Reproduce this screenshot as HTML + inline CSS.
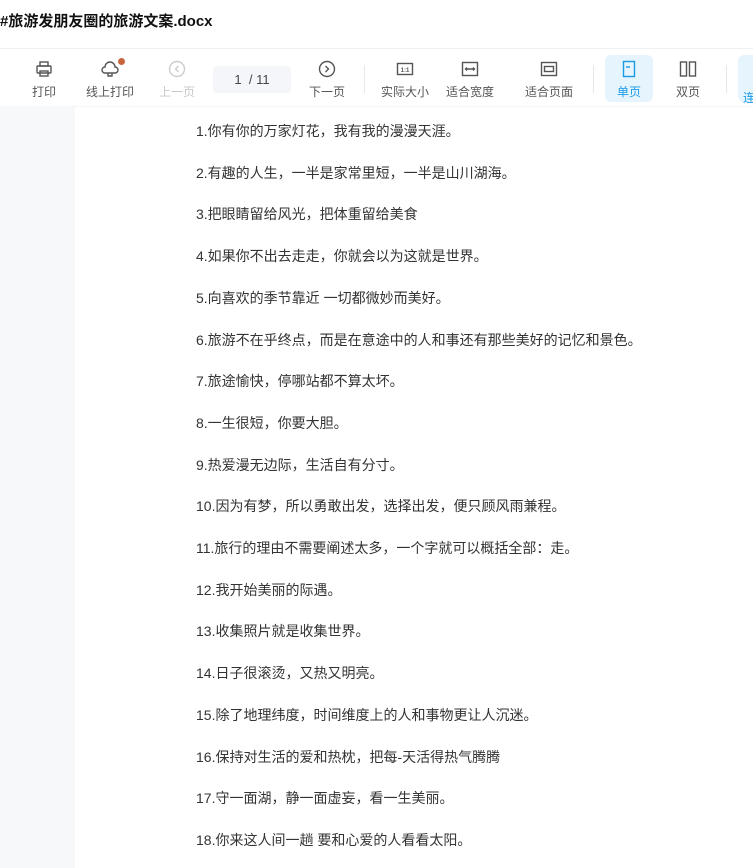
<!DOCTYPE html>
<html><head><meta charset="utf-8"><style>
*{margin:0;padding:0;box-sizing:border-box}
body{width:753px;height:868px;overflow:hidden;background:#fff;font-family:"Liberation Sans","Noto Sans CJK SC",sans-serif;position:relative}
.title{position:absolute;left:0;top:10px;font-size:15px;font-weight:bold;color:#111}
.tb{position:absolute;left:0;top:48px;width:753px;height:59px;border-top:1px solid #eef0f4;border-bottom:1px dotted #eceef2}
.it{position:absolute;top:0;width:64px;margin-left:-32px;text-align:center;font-size:12px;color:#555}
.it svg{position:absolute;left:23px;top:11px}
.it span{position:absolute;left:0;right:0;top:34px}
.sep{position:absolute;top:16px;width:1px;height:28px;background:#e6e8ec}
.left{position:absolute;left:0;top:107px;width:75px;height:761px;background:#f7f8fa}
.doc{position:absolute;left:196px;top:111px;font-size:14px;color:#333;line-height:41.7px}
</style></head><body>
<div class="title">#旅游发朋友圈的旅游文案.docx</div>
<div class="tb">
<div class="it" style="left:44px"><svg width="18" height="18" viewBox="0 0 18 18" fill="none" stroke="#555" stroke-width="1.4"><rect x="5" y="2" width="8" height="4"/><rect x="2" y="6" width="14" height="7" rx="1"/><rect x="5" y="11" width="8" height="5"/></svg><span>打印</span></div>
<div class="it" style="left:110px"><svg width="18" height="18" viewBox="0 0 18 18" fill="none" stroke="#555" stroke-width="1.4"><path d="M4 13a3 3 0 0 1 0-6a5 5 0 0 1 10 0a3 3 0 0 1 0 6z"/><path d="M7 13v3h4v-3"/></svg><span>线上打印</span><div style="position:absolute;left:40px;top:9px;width:7px;height:7px;border-radius:50%;background:#c8653e"></div></div>
<div class="it" style="left:177px;color:#c8c8c8"><svg width="18" height="18" viewBox="0 0 18 18" fill="none" stroke="#ccc" stroke-width="1.4"><circle cx="9" cy="9" r="7.5"/><path d="M10.5 6l-3 3l3 3"/></svg><span>上一页</span></div>
<div style="position:absolute;left:213px;top:17px;width:78px;height:27px;background:#f5f6fa;border-radius:4px;font-size:13px;color:#444;text-align:center;line-height:27px">1 &nbsp;/ 11</div>
<div class="it" style="left:327px"><svg width="18" height="18" viewBox="0 0 18 18" fill="none" stroke="#555" stroke-width="1.4"><circle cx="9" cy="9" r="7.5"/><path d="M7.5 6l3 3l-3 3"/></svg><span>下一页</span></div>
<div class="sep" style="left:364px"></div>
<div class="it" style="left:405px"><svg width="18" height="18" viewBox="0 0 18 18" fill="none" stroke="#555" stroke-width="1.4"><rect x="1.5" y="3.5" width="15" height="11"/><text x="9" y="12" font-size="6" text-anchor="middle" fill="#555" stroke="none" font-weight="bold">1:1</text></svg><span>实际大小</span></div>
<div class="it" style="left:470px"><svg width="18" height="18" viewBox="0 0 18 18" fill="none" stroke="#555" stroke-width="1.4"><rect x="1.5" y="2.5" width="15" height="13"/><path d="M5 9h8M6 7.5L4.5 9L6 10.5M12 7.5l1.5 1.5l-1.5 1.5"/></svg><span>适合宽度</span></div>
<div class="it" style="left:549px"><svg width="18" height="18" viewBox="0 0 18 18" fill="none" stroke="#555" stroke-width="1.4"><rect x="1.5" y="2.5" width="15" height="13"/><rect x="4.5" y="6.5" width="9" height="5"/></svg><span>适合页面</span></div>
<div class="sep" style="left:593px"></div>
<div style="position:absolute;left:605px;top:6px;width:48px;height:47px;background:#e6f4fd;border-radius:6px"></div>
<div class="it" style="left:629px;color:#1a9be6"><svg width="18" height="18" viewBox="0 0 18 18" fill="none" stroke="#1a9be6" stroke-width="1.4"><rect x="3.5" y="1.5" width="11" height="15"/><path d="M6 7h4"/></svg><span>单页</span></div>
<div class="it" style="left:688px"><svg width="18" height="18" viewBox="0 0 18 18" fill="none" stroke="#555" stroke-width="1.4"><rect x="1.5" y="2" width="6" height="14"/><rect x="10.5" y="2" width="6" height="14"/></svg><span>双页</span></div>
<div class="sep" style="left:726px"></div>
<div style="position:absolute;left:738px;top:6px;width:40px;height:47px;background:#e6f4fd;border-radius:6px;font-size:12px;color:#1a9be6;padding:34px 0 0 5px">连</div>
</div>
<div class="left"></div>
<div class="doc">
1.你有你的万家灯花，我有我的漫漫天涯。<br>
2.有趣的人生，一半是家常里短，一半是山川湖海。<br>
3.把眼睛留给风光，把体重留给美食<br>
4.如果你不出去走走，你就会以为这就是世界。<br>
5.向喜欢的季节靠近 一切都微妙而美好。<br>
6.旅游不在乎终点，而是在意途中的人和事还有那些美好的记忆和景色。<br>
7.旅途愉快，停哪站都不算太坏。<br>
8.一生很短，你要大胆。<br>
9.热爱漫无边际，生活自有分寸。<br>
10.因为有梦，所以勇敢出发，选择出发，便只顾风雨兼程。<br>
11.旅行的理由不需要阐述太多，一个字就可以概括全部：走。<br>
12.我开始美丽的际遇。<br>
13.收集照片就是收集世界。<br>
14.日子很滚烫，又热又明亮。<br>
15.除了地理纬度，时间维度上的人和事物更让人沉迷。<br>
16.保持对生活的爱和热枕，把每-天活得热气腾腾<br>
17.守一面湖，静一面虚妄，看一生美丽。<br>
18.你来这人间一趟 要和心爱的人看看太阳。
</div>
</body></html>
